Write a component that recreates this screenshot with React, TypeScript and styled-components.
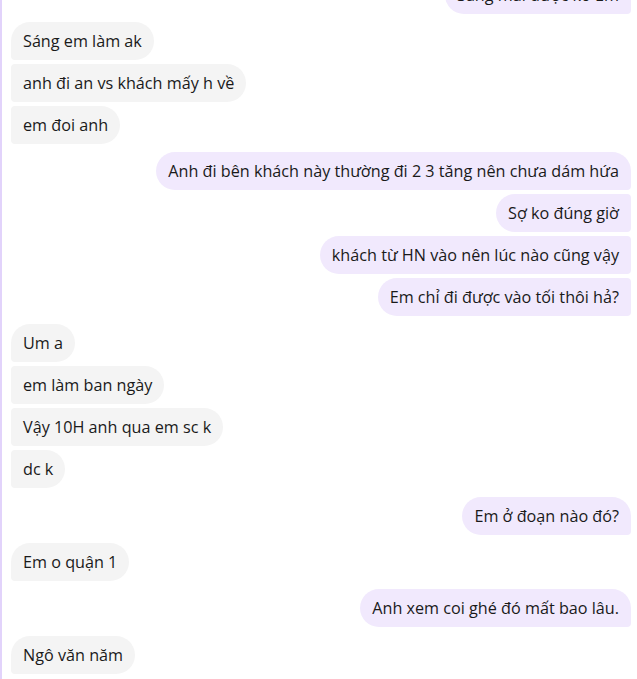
import React from "react";
import styled, { createGlobalStyle, css } from "styled-components";

const Global = createGlobalStyle`
  html, body { margin: 0; padding: 0; background: #ffffff; }
  body { font-family: "Open Sans", "Noto Sans", sans-serif; }
`;

const Frame = styled.div`
  height: 679px;
  overflow: hidden;
  border-left: 2px solid #e2d3fb;
  box-sizing: border-box;
  padding: 0 6px 0 9px;
`;

const Thread = styled.div`
  display: flex;
  flex-direction: column;
  gap: 8.3px;
  margin-top: -24.5px;
`;

const Group = styled.div<{ $mine: boolean }>`
  display: flex;
  flex-direction: column;
  align-items: ${(p) => (p.$mine ? "flex-end" : "flex-start")};
  gap: 4px;
`;

const Bubble = styled.div<{ $mine: boolean; $first: boolean }>`
  box-sizing: border-box;
  height: 38px;
  padding: 0 12px;
  display: flex;
  align-items: center;
  font-size: 16.2px;
  line-height: 22px;
  color: #1a1a1a;
  white-space: nowrap;
  ${(p) =>
    p.$mine
      ? css`
          background: #f1e9fd;
          border-radius: 19px ${p.$first ? "19px" : "4px"} 4px 19px;
        `
      : css`
          background: #f4f4f4;
          border-radius: ${p.$first ? "19px" : "4px"} 19px 19px 4px;
        `}
`;

const groups: { mine: boolean; msgs: string[] }[] = [
  { mine: true, msgs: ["Sáng mai được ko Em"] },
  { mine: false, msgs: ["Sáng em làm ak", "anh đi an vs khách mấy h về", "em đoi anh"] },
  {
    mine: true,
    msgs: [
      "Anh đi bên khách này thường đi 2 3 tăng nên chưa dám hứa",
      "Sợ ko đúng giờ",
      "khách từ HN vào nên lúc nào cũng vậy",
      "Em chỉ đi được vào tối thôi hả?",
    ],
  },
  { mine: false, msgs: ["Um a", "em làm ban ngày", "Vậy 10H anh qua em sc k", "dc k"] },
  { mine: true, msgs: ["Em ở đoạn nào đó?"] },
  { mine: false, msgs: ["Em o quận 1"] },
  { mine: true, msgs: ["Anh xem coi ghé đó mất bao lâu."] },
  { mine: false, msgs: ["Ngô văn năm"] },
];

export default function App() {
  return (
    <>
      <Global />
      <Frame>
        <Thread>
          {groups.map((g, gi) => (
            <Group key={gi} $mine={g.mine}>
              {g.msgs.map((m, mi) => (
                <Bubble key={mi} $mine={g.mine} $first={mi === 0}>
                  {m}
                </Bubble>
              ))}
            </Group>
          ))}
        </Thread>
      </Frame>
    </>
  );
}
